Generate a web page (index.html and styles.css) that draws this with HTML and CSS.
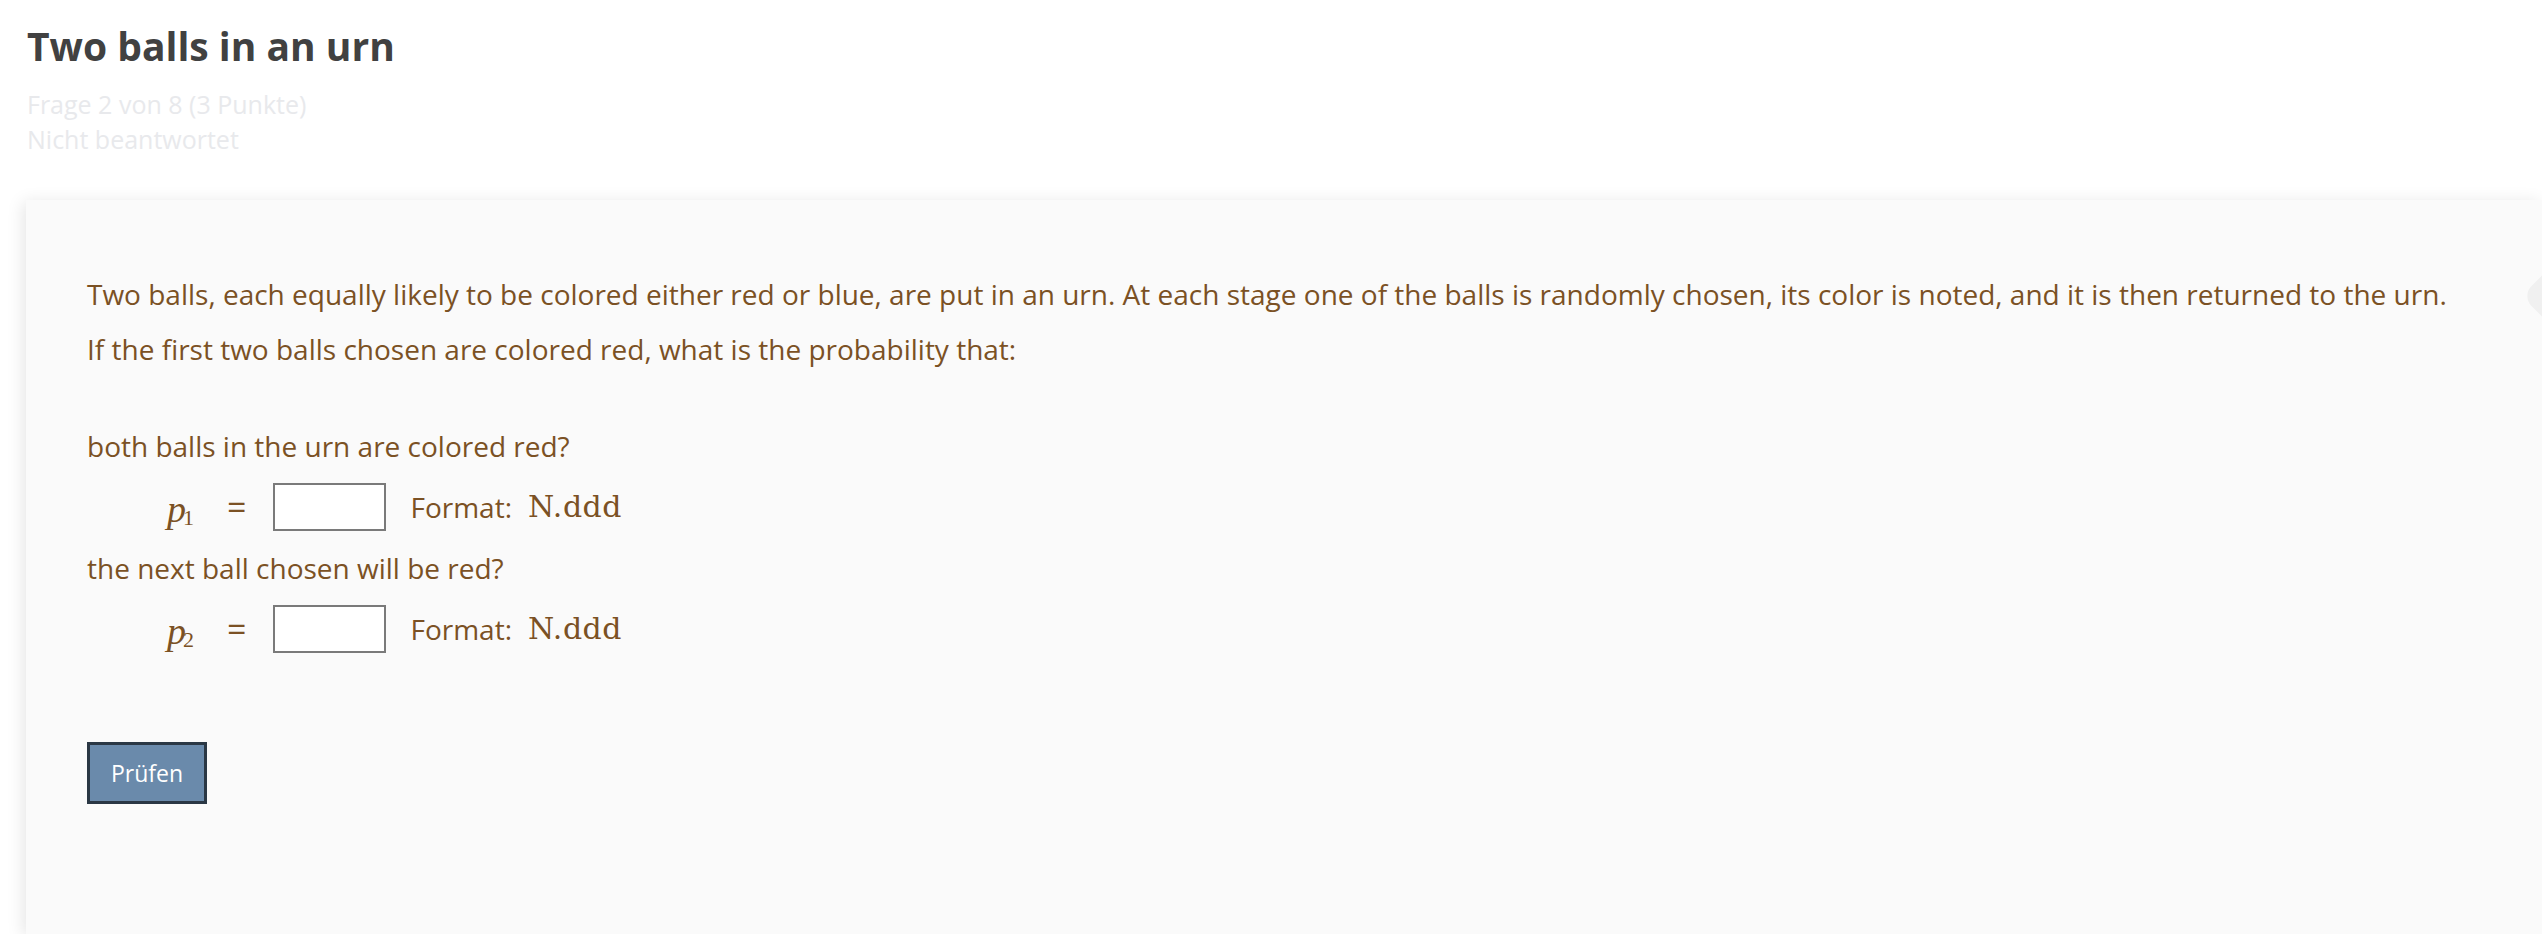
FILE: index.html
```html
<!DOCTYPE html>
<html lang="de">
<head>
<meta charset="utf-8">
<title>Two balls in an urn</title>
<link rel="stylesheet" href="styles.css">
</head>
<body>
<header class="head">
  <h1 class="title">Two balls in an urn</h1>
  <div class="meta">
    <div>Frage 2 von 8 (3 Punkte)</div>
    <div>Nicht beantwortet</div>
  </div>
</header>
<main class="card">
  <p class="intro">Two balls, each equally likely to be colored either red or blue, are put in an urn. At each stage one of the balls is randomly chosen, its color is noted, and it is then returned to the urn.<br>If the first two balls chosen are colored red, what is the probability that:</p>

  <div class="part">
    <div class="label">both balls in the urn are colored red?</div>
    <div class="row">
      <span class="var"><i>p</i><sub>1</sub></span>
      <span class="eq">=</span>
      <input class="answer" type="text">
      <span class="fmt">Format:</span>
      <span class="mono">N.ddd</span>
    </div>
  </div>

  <div class="part">
    <div class="label">the next ball chosen will be red?</div>
    <div class="row">
      <span class="var"><i>p</i><sub>2</sub></span>
      <span class="eq">=</span>
      <input class="answer" type="text">
      <span class="fmt">Format:</span>
      <span class="mono">N.ddd</span>
    </div>
  </div>

  <button class="check" type="button">Prüfen</button>
  <div class="edge-tab"></div>
</main>
</body>
</html>
```
FILE: styles.css
```css
html, body {
  margin: 0;
  padding: 0;
  background: #ffffff;
  overflow: hidden;
}
body {
  font-family: "Open Sans", "Liberation Sans", sans-serif;
  height: 934px;
}
.head {
  padding: 19px 0 0 27px;
}
.title {
  margin: 0;
  font-size: 39px;
  font-weight: 700;
  line-height: 54px;
  color: #414141;
}
.meta {
  margin-top: 14px;
  font-size: 25px;
  line-height: 35px;
  color: #e8e9ec;
}
.card {
  position: relative;
  box-sizing: border-box;
  margin: 43px 0 0 26px;
  height: 734px;
  padding: 67px 0 0 61px;
  background: #fafafa;
  box-shadow: -3px 2px 16px rgba(0, 0, 0, 0.10);
  color: #7b5124;
  font-size: 28px;
  overflow: hidden;
}
.intro {
  margin: 0;
  line-height: 55px;
}
.part {
  margin-top: 48px;
}
.part + .part {
  margin-top: 16px;
}
.label {
  line-height: 42px;
}
.row {
  display: flex;
  align-items: center;
  height: 48px;
  margin-top: 16px;
  padding-left: 80px;
}
.var {
  font-family: "Liberation Serif", "Times New Roman", serif;
  font-size: 38px;
  width: 24px;
  line-height: 1;
  position: relative;
  top: 2px;
}
.var i {
  font-style: italic;
}
.var sub {
  font-size: 22px;
  vertical-align: -3px;
  margin-left: -3px;
}
.eq {
  font-family: "Open Sans", "Liberation Sans", sans-serif;
  font-weight: 400;
  font-size: 34px;
  margin-left: 36px;
  line-height: 1;
}
.answer {
  box-sizing: border-box;
  width: 113px;
  height: 48px;
  margin: 0 0 0 27px;
  border: 2px solid #7a7a7a;
  border-radius: 0;
  background: #ffffff;
  padding: 0 6px;
  font-size: 24px;
  outline: none;
}
.fmt {
  margin-left: 24px;
}
.mono {
  font-family: "DejaVu Serif", "Liberation Serif", serif;
  font-size: 30px;
  letter-spacing: 0.5px;
  margin-left: 16px;
  position: relative;
  top: -1px;
}
.check {
  display: block;
  margin-top: 89px;
  padding: 0 21px;
  height: 62px;
  border: 3px solid #2a3744;
  border-radius: 0;
  background: #6a8aab;
  color: #ffffff;
  font-family: "Open Sans", "Liberation Sans", sans-serif;
  font-size: 23px;
  line-height: 56px;
}
.edge-tab {
  position: absolute;
  top: 66px;
  right: -52px;
  width: 60px;
  height: 60px;
  background: #f0f0f0;
  border-radius: 14px;
  transform: rotate(45deg);
}
```
